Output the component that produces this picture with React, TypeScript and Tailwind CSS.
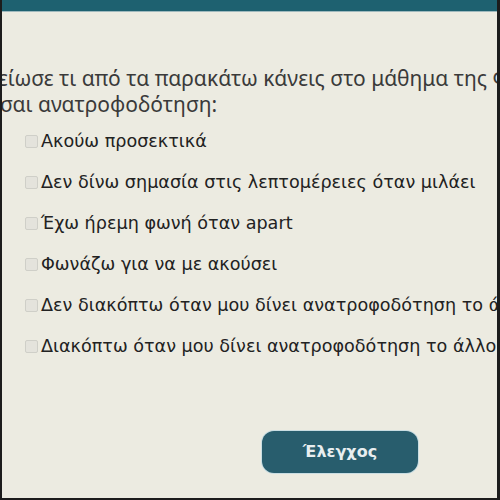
const items = [
  'Ακούω προσεκτικά',
  'Δεν δίνω σημασία στις λεπτομέρειες όταν μιλάει',
  'Έχω ήρεμη φωνή όταν apart',
  'Φωνάζω για να με ακούσει',
  'Δεν διακόπτω όταν μου δίνει ανατροφοδότηση το άλλο άτομο',
  'Διακόπτω όταν μου δίνει ανατροφοδότηση το άλλο άτομο',
]

export default function App() {
  return (
    <div className="w-[500px] h-[500px] overflow-hidden bg-[#1c1c1c] pl-[2px] pr-[3px] pb-[2px]">
      <div className="flex h-full flex-col overflow-hidden bg-[#ecebe1] font-['DejaVu_Sans',sans-serif] text-[#333]">
        <div className="h-[12px] shrink-0 bg-[#1e6170] border-b border-[#9fb9bd]" />

        <div className="mt-[53px] whitespace-nowrap font-['Noto_Sans',sans-serif] text-[21px] leading-[26px] text-[#3a3a3a]">
          <p className="-ml-[4px]">είωσε τι από τα παρακάτω κάνεις στο μάθημα της Φυσικής</p>
          <p className="-ml-[2px]">σαι ανατροφοδότηση:</p>
        </div>

        <ul className="mt-[14px] flex flex-col gap-[20px] pl-[23px] whitespace-nowrap text-[17.6px] leading-[21px] text-[#222]">
          {items.map((t) => (
            <li key={t} className="flex items-center">
              <span className="mr-[3px] h-[13px] w-[13px] shrink-0 rounded-[2px] border border-[#cfcfc8] bg-[#e4e3dc]" />
              {t}
            </li>
          ))}
        </ul>

        <div className="mt-auto mb-[25px] pl-[260px]">
          <button className="h-[42px] w-[156px] rounded-[12px] bg-[#285d6d] text-[16px] font-bold text-[#e8eef0] shadow-[0_0_0_1px_#c9dde2]">
            Έλεγχος
          </button>
        </div>
      </div>
    </div>
  )
}
